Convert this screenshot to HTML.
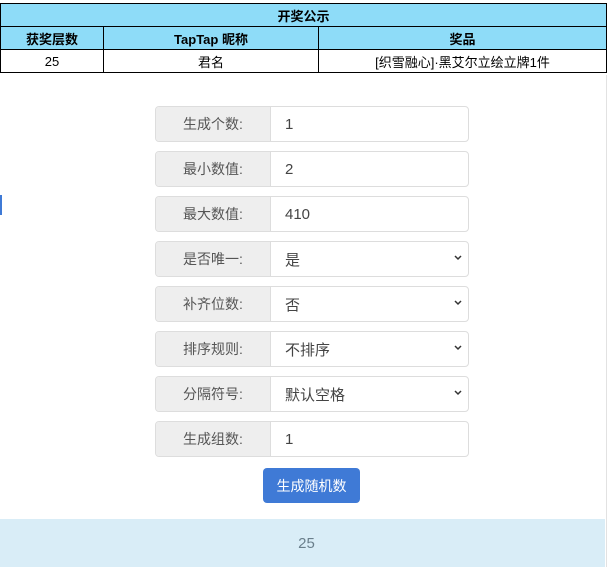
<!DOCTYPE html>
<html><head><meta charset="utf-8"><style>
body{margin:0;width:611px;height:567px;background:#fff;position:relative;overflow:hidden;font-family:"Liberation Sans","Noto Sans CJK SC",sans-serif;}
.t{position:absolute;left:0;top:3px;width:607px;border-collapse:collapse;font-size:13px;color:#000}
.t td{border:1px solid #000;text-align:center;height:22px;padding:0}
.cy{background:#8edcf8;font-weight:bold}
.vline{position:absolute;left:606px;top:75px;width:1px;height:492px;background:#e2e2e2}
.row{position:absolute;left:155px;width:312px;height:34px;border:1px solid #ddd;border-radius:4px;overflow:hidden;display:flex;font-size:14px;color:#555}
.lab{width:114px;background:#eee;border-right:1px solid #ddd;display:flex;align-items:center;justify-content:center}
.val{flex:1;display:flex;align-items:center;padding-left:14px;position:relative;color:#444;font-size:15px}
.chev{position:absolute;right:6px;top:13px}
.btn{position:absolute;left:263px;top:468px;width:97px;height:35px;background:#3f7ad6;border-radius:4px;color:#fff;font-size:14px;display:flex;align-items:center;justify-content:center}
.res{position:absolute;left:0;top:519px;width:605px;height:48px;background:#d9edf7;color:#6a7f8c;font-size:15px;display:flex;align-items:center;justify-content:center;padding-left:8px;box-sizing:border-box}
.mark{position:absolute;left:0;top:195px;width:2px;height:20px;background:#3f7ad6}
</style></head><body>
<table class="t">
<tr class="cy"><td colspan="3">开奖公示</td></tr>
<tr class="cy"><td style="width:102px">获奖层数</td><td style="width:214px">TapTap 昵称</td><td>奖品</td></tr>
<tr><td>25</td><td>君名</td><td>[织雪融心]·黑艾尔立绘立牌1件</td></tr>
</table>
<div class="vline"></div>
<div class="mark"></div>
<div class="row" style="top:106px"><div class="lab">生成个数:</div><div class="val">1</div></div>
<div class="row" style="top:151px"><div class="lab">最小数值:</div><div class="val">2</div></div>
<div class="row" style="top:196px"><div class="lab">最大数值:</div><div class="val">410</div></div>
<div class="row" style="top:241px"><div class="lab">是否唯一:</div><div class="val">是<svg class="chev" width="8" height="6"><path d="M1 1l3 3 3-3" stroke="#333" stroke-width="1.5" fill="none"/></svg></div></div>
<div class="row" style="top:286px"><div class="lab">补齐位数:</div><div class="val">否<svg class="chev" width="8" height="6"><path d="M1 1l3 3 3-3" stroke="#333" stroke-width="1.5" fill="none"/></svg></div></div>
<div class="row" style="top:331px"><div class="lab">排序规则:</div><div class="val">不排序<svg class="chev" width="8" height="6"><path d="M1 1l3 3 3-3" stroke="#333" stroke-width="1.5" fill="none"/></svg></div></div>
<div class="row" style="top:376px"><div class="lab">分隔符号:</div><div class="val">默认空格<svg class="chev" width="8" height="6"><path d="M1 1l3 3 3-3" stroke="#333" stroke-width="1.5" fill="none"/></svg></div></div>
<div class="row" style="top:421px"><div class="lab">生成组数:</div><div class="val">1</div></div>
<div class="btn">生成随机数</div>
<div class="res">25</div>
</body></html>
